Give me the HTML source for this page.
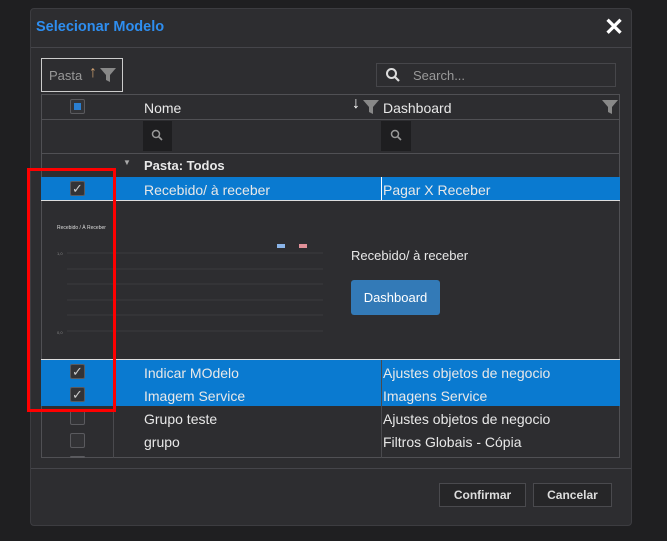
<!DOCTYPE html>
<html><head><style>
*{box-sizing:border-box;margin:0;padding:0}
body{width:667px;height:541px;background:#1f1f21;font-family:"Liberation Sans",sans-serif;position:relative;overflow:hidden;color:#e8e8e8}
.a{position:absolute}
.dlg{left:30px;top:8px;width:602px;height:518px;background:#2d2d30;border:1px solid #3c3c40;border-radius:4px}
.t{font-size:14px}
.cb{width:15px;height:15px;border:1px solid #5a5a5e;background:#333336;border-radius:2px}
.chk{color:#ccc;font-size:13px;line-height:13px;text-align:center}
.row{left:41px;width:579px;height:23px}
.sel{background:#0a7ad0}
.vl{width:1px;background:#4a4a4e}
.btn{border:1px solid #4a4a4e;background:#262628;font-size:12px;font-weight:bold;color:#ddd;text-align:center;line-height:22px}
</style></head><body>
<div class="a dlg"></div>
<div class="a" style="left:36px;top:19px;font-size:14.5px;font-weight:bold;color:#2e8ef0">Selecionar Modelo</div>
<div class="a" style="left:604px;top:13px;font-size:24px;font-weight:bold;color:#fff">✕</div>
<div class="a" style="left:31px;top:47px;width:600px;height:1px;background:#45454a"></div>

<div class="a" style="left:41px;top:58px;width:82px;height:34px;border:1px solid #ccc"></div>
<div class="a t" style="left:49px;top:68px;color:#999;font-size:13px">Pasta</div>
<div class="a" style="left:89px;top:64px;color:#d0a070;font-size:16px">↑</div>
<svg class="a" style="left:100px;top:68px" width="16" height="14"><path d="M0 0H16L10 7V14L6 12V7Z" fill="#888"/></svg>

<div class="a" style="left:376px;top:63px;width:240px;height:24px;border:1px solid #46464a"></div>
<svg class="a" style="left:385px;top:67px" width="16" height="16"><circle cx="6.5" cy="6.5" r="4.5" stroke="#ddd" stroke-width="2" fill="none"/><path d="M10 10L14 14" stroke="#ddd" stroke-width="2.2"/></svg>
<div class="a" style="left:413px;top:68px;font-size:13px;color:#999">Search...</div>

<div class="a" style="left:41px;top:94px;width:579px;height:364px;border:1px solid #505054"></div>
<div class="a" style="left:42px;top:119px;width:577px;height:1px;background:#505054"></div>
<div class="a" style="left:42px;top:153px;width:577px;height:1px;background:#505054"></div>
<div class="a cb" style="left:70px;top:99px"></div>
<div class="a" style="left:74px;top:103px;width:7px;height:7px;background:#2a7ed0"></div>
<div class="a t" style="left:144px;top:100px">Nome</div>
<div class="a" style="left:352px;top:95px;font-size:16px;color:#fff">↓</div>
<svg class="a" style="left:363px;top:100px" width="16" height="14"><path d="M0 0H16L10 7V14L6 12V7Z" fill="#888"/></svg>
<div class="a t" style="left:383px;top:100px">Dashboard</div>
<svg class="a" style="left:602px;top:100px" width="16" height="14"><path d="M0 0H16L10 7V14L6 12V7Z" fill="#888"/></svg>
<div class="a" style="left:143px;top:121px;width:29px;height:30px;background:#1e1e20"></div>
<div class="a" style="left:381px;top:121px;width:30px;height:30px;background:#1e1e20"></div>
<svg class="a" style="left:151px;top:129px" width="12" height="12"><circle cx="5" cy="5" r="3.5" stroke="#999" stroke-width="1.5" fill="none"/><path d="M7.5 7.5L11 11" stroke="#999" stroke-width="1.6"/></svg>
<svg class="a" style="left:390px;top:129px" width="12" height="12"><circle cx="5" cy="5" r="3.5" stroke="#999" stroke-width="1.5" fill="none"/><path d="M7.5 7.5L11 11" stroke="#999" stroke-width="1.6"/></svg>
<div class="a" style="left:123px;top:158px;font-size:8px;color:#aaa">▼</div>
<div class="a" style="left:144px;top:158px;font-size:13px;font-weight:bold">Pasta: Todos</div>

<div class="a row sel" style="top:177px"></div>
<div class="a row sel" style="top:360px;height:46px"></div>
<div class="a" style="left:41px;top:359px;width:579px;height:1px;background:#ddd"></div>
<div class="a" style="left:41px;top:200px;width:579px;height:1px;background:#ddd"></div>
<div class="a vl" style="left:113px;top:177px;height:23px"></div>
<div class="a vl" style="left:381px;top:177px;height:23px;background:#fff"></div>
<div class="a vl" style="left:113px;top:360px;height:98px"></div>
<div class="a vl" style="left:381px;top:360px;height:98px"></div>

<div class="a cb chk" style="left:70px;top:181px">✓</div>
<div class="a t" style="left:144px;top:182px">Recebido/ à receber</div>
<div class="a t" style="left:383px;top:182px">Pagar X Receber</div>

<div class="a" style="left:57px;top:225px;font-size:5px;color:#ddd">Recebido / À Receber</div>
<div class="a" style="left:277px;top:244px;width:44px;height:4px;background:linear-gradient(90deg,#8ab4e8 0 8px,transparent 8px 22px,#e09098 22px 30px,transparent 30px)"></div>
<svg class="a" style="left:55px;top:250px" width="280" height="90"><g stroke="#3a3a3e" stroke-width="1"><path d="M12 3H268M12 19H268M12 34H268M12 50H268M12 65H268M12 81H268"/></g><g fill="#888" font-size="4" font-family="Liberation Sans"><text x="2" y="84">0,0</text><text x="2" y="5">1,0</text></g></svg>
<div class="a t" style="left:351px;top:248px;font-size:13px">Recebido/ à receber</div>
<div class="a" style="left:351px;top:280px;width:89px;height:35px;background:#337ab7;border-radius:3px;font-size:13px;color:#fff;text-align:center;line-height:35px">Dashboard</div>

<div class="a cb chk" style="left:70px;top:364px">✓</div>
<div class="a t" style="left:144px;top:365px">Indicar MOdelo</div>
<div class="a t" style="left:383px;top:365px">Ajustes objetos de negocio</div>
<div class="a cb chk" style="left:70px;top:387px">✓</div>
<div class="a t" style="left:144px;top:388px">Imagem Service</div>
<div class="a t" style="left:383px;top:388px">Imagens Service</div>
<div class="a cb" style="left:70px;top:410px"></div>
<div class="a t" style="left:144px;top:411px">Grupo teste</div>
<div class="a t" style="left:383px;top:411px">Ajustes objetos de negocio</div>
<div class="a cb" style="left:70px;top:433px"></div>
<div class="a t" style="left:144px;top:434px">grupo</div>
<div class="a t" style="left:383px;top:434px">Filtros Globais - Cópia</div>
<div class="a cb" style="left:70px;top:456px;height:2px"></div>

<div class="a" style="left:27px;top:168px;width:89px;height:244px;border:3px solid #f00"></div>

<div class="a" style="left:31px;top:468px;width:600px;height:1px;background:#45454a"></div>
<div class="a btn" style="left:439px;top:483px;width:87px;height:24px">Confirmar</div>
<div class="a btn" style="left:533px;top:483px;width:79px;height:24px">Cancelar</div>
</body></html>
